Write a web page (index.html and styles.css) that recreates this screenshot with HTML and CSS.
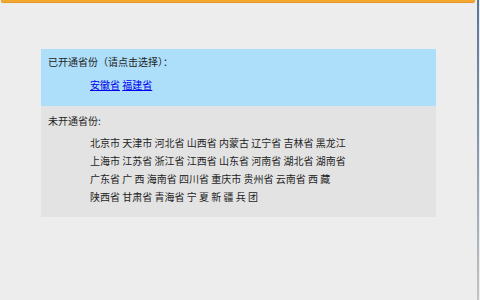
FILE: index.html
```html
<!DOCTYPE html>
<html lang="zh-CN">

<head>
    <meta charset="UTF-8">
    <title>开通省份</title>
    <link rel="stylesheet" href="styles.css">
</head>

<body>
    <div class="top-bar"></div>
    <div class="side-edge"></div>

    <div class="panel">
        <!-- 已开通 -->
        <div class="open-box">
            <div class="label">已开通省份（请点击选择）：</div>
            <div class="list links">
                <a href="#">安徽省</a> <a href="#">福建省</a>
            </div>
        </div>

        <!-- 未开通 -->
        <div class="closed-box">
            <div class="label">未开通省份:</div>
            <div class="list rows">
                <div>北京市 天津市 河北省 山西省 内蒙古 辽宁省 吉林省 黑龙江</div>
                <div>上海市 江苏省 浙江省 江西省 山东省 河南省 湖北省 湖南省</div>
                <div>广东省 广 西 海南省 四川省 重庆市 贵州省 云南省 西 藏</div>
                <div>陕西省 甘肃省 青海省 宁 夏 新 疆 兵 团</div>
            </div>
        </div>
    </div>
</body>

</html>
```

FILE: styles.css
```css
html,
body {
    height: 100%;
}

body {
    margin: 0;
    background: #ededed;
    font-family: "Noto Sans CJK SC", "Noto Sans", sans-serif;
    font-size: 10px;
    color: #1e1e1e;
    overflow: hidden;
}

.top-bar {
    height: 2px;
    margin: 0 5px 0 1px;
    background: #f3a630;
    border-bottom: 1px solid #e59a25;
    border-radius: 0 0 2px 2px;
}

.side-edge {
    position: fixed;
    top: 0;
    right: 1px;
    width: 2px;
    height: 100%;
    background: linear-gradient(#56779a, #7d93a8 40%, #c4c4c4);
}

.panel {
    width: 395px;
    margin: 46px 0 0 41px;
}

.label {
    line-height: 14px;
}

.list {
    margin-left: 42px;
}

.open-box {
    background: #addffb;
    padding: 6px 7px 14px;
}

.links {
    margin-top: 9px;
    line-height: 14px;
}

.links a {
    color: #0000ee;
}

.closed-box {
    background: #e3e3e3;
    padding: 8px 7px 11px;
}

.rows {
    margin-top: 6px;
    line-height: 18px;
}
```
